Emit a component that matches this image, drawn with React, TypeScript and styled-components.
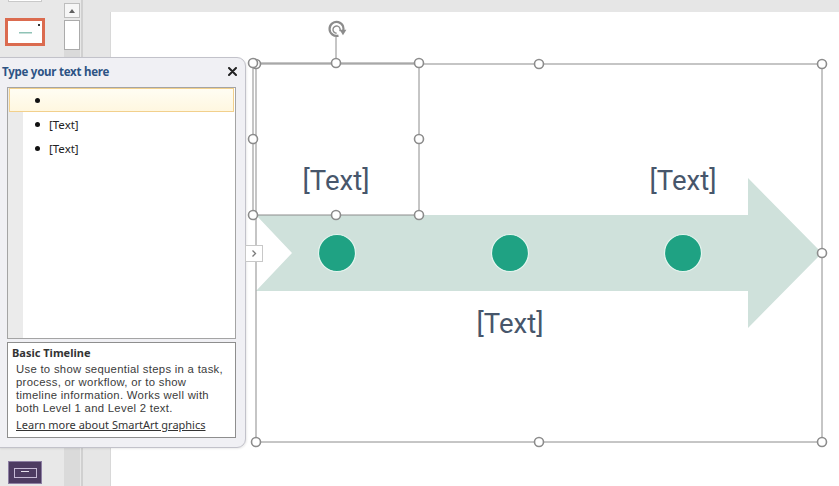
import styled, { createGlobalStyle } from 'styled-components';

const GlobalStyle = createGlobalStyle`
  html, body {
    margin: 0;
    padding: 0;
    overflow: hidden;
    background: #e6e6e6;
  }
`;

const Window = styled.div`
  position: relative;
  width: 839px;
  height: 486px;
  display: flex;
  background: #e6e6e6;
  overflow: hidden;
  font-family: 'Noto Sans', 'Open Sans', sans-serif;
`;

/* ---------- slide thumbnails ---------- */

const ThumbPane = styled.div`
  width: 81px;
  flex: none;
  display: flex;
  background: #e8e8e8;
  border-right: 2px solid #d0d0d0;
`;

const ThumbList = styled.div`
  width: 63px;
  display: flex;
  flex-direction: column;
  align-items: flex-start;
  padding-left: 8px;
  box-sizing: border-box;
`;

type ThumbKind = 'plain' | 'selected' | 'dark';

const Thumb = styled.div<{ $kind: ThumbKind }>`
  position: relative;
  width: 34px;
  height: 22px;
  flex: none;
  box-sizing: border-box;
  display: flex;
  align-items: center;
  justify-content: center;
  background: ${(p) => (p.$kind === 'dark' ? '#4d3b62' : '#ffffff')};
  border: 1px solid ${(p) => (p.$kind === 'dark' ? '#8d7fa3' : p.$kind === 'selected' ? '#ffffff' : '#c9c9c9')};
  outline: ${(p) => (p.$kind === 'selected' ? '3px solid #db6b4f' : 'none')};

  &:first-child {
    margin-top: -20px;
  }
  &:nth-child(2) {
    margin-top: 19px;
  }
  &:last-child {
    margin-top: auto;
    margin-bottom: 2px;
    height: 23px;
  }
`;

const ThumbCaption = styled.span`
  width: 13px;
  height: 1px;
  background: #8fc3b6;
  box-shadow: 0 1px 0 #c7e0da;
`;

const ThumbMark = styled.span`
  position: absolute;
  top: 2px;
  right: 1px;
  width: 2px;
  height: 2px;
  background: #333;
`;

const ThumbFrame = styled.span`
  width: 23px;
  height: 10px;
  box-sizing: border-box;
  border: 1px solid #c6bad6;
  display: flex;
  justify-content: center;
  padding-top: 2px;

  &::after {
    content: '';
    width: 8px;
    height: 1px;
    background: #e6e0ee;
  }
`;

const ScrollBar = styled.div`
  width: 16px;
  display: flex;
  flex-direction: column;
  margin-left: 1px;
`;

const ScrollButton = styled.div`
  margin-top: 3px;
  height: 15px;
  box-sizing: border-box;
  background: #f6f6f6;
  border: 1px solid #bdbdbd;
  display: flex;
  align-items: center;
  justify-content: center;

  &::before {
    content: '';
    border-left: 3px solid transparent;
    border-right: 3px solid transparent;
    border-bottom: 4px solid #606060;
  }
`;

const ScrollTrack = styled.div`
  flex: 1;
  margin-top: 2px;
  background: #dadada;
`;

const ScrollThumb = styled.div`
  height: 30px;
  box-sizing: border-box;
  background: #ffffff;
  border: 1px solid #ababab;
`;

const Gutter = styled.div`
  width: 28px;
  flex: none;
`;

/* ---------- slide with the SmartArt graphic ---------- */

const Stage = styled.div`
  flex: 1;
  padding-top: 12px;
  display: flex;
`;

const Slide = styled.div`
  position: relative;
  flex: 1;
  background: #ffffff;
  box-shadow: -1px 0 0 #d8d8d8;
`;

const Canvas = styled.svg`
  position: absolute;
  left: 0;
  top: 0;
`;

const NodeLabel = styled.div<{ $x: number; $y: number }>`
  position: absolute;
  left: ${(p) => p.$x}px;
  top: ${(p) => p.$y}px;
  transform: translate(-50%, -50%);
  font-family: Roboto, 'Noto Sans', sans-serif;
  font-size: 27.5px;
  font-weight: 400;
  color: #47566b;
  white-space: nowrap;
  line-height: 1;
`;

/* ---------- text pane ---------- */

const TextPane = styled.div`
  position: absolute;
  left: -1px;
  top: 57px;
  width: 247px;
  height: 391px;
  box-sizing: border-box;
  display: flex;
  flex-direction: column;
  padding: 0 9px 9px 7px;
  background: #f0f0f4;
  border: 1px solid #c2c2ca;
  border-radius: 0 9px 9px 0;
  box-shadow: 1px 1px 2px rgba(0, 0, 0, 0.08);
`;

const PaneHeader = styled.div`
  height: 29px;
  margin: 0 -9px 0 -7px;
  padding: 0 8px 2px 2px;
  box-sizing: border-box;
  display: flex;
  align-items: center;
  justify-content: space-between;
`;

const PaneTitle = styled.span`
  font-size: 11.5px;
  font-weight: 700;
  letter-spacing: -0.25px;
  color: #2d5384;
`;

const CloseButton = styled.svg`
  width: 9px;
  height: 9px;
`;

const OutlineBox = styled.div`
  height: 252px;
  flex: none;
  box-sizing: border-box;
  border: 1px solid #a4a4a4;
  background: linear-gradient(90deg, #ebebeb 0 15px, #ffffff 15px);
`;

const OutlineRow = styled.div<{ $active?: boolean }>`
  height: 24px;
  margin: 0 1px;
  box-sizing: border-box;
  display: flex;
  align-items: center;
  gap: 9px;
  padding-left: 25px;
  border: 1px solid ${(p) => (p.$active ? '#f2d08c' : 'transparent')};
  background: ${(p) => (p.$active ? 'linear-gradient(#fffdf3, #fff7e0)' : 'transparent')};
  font-size: 11.5px;
  color: #222;
`;

const Bullet = styled.span`
  width: 5px;
  height: 5px;
  border-radius: 50%;
  background: #111;
  flex: none;
`;

const DescBox = styled.div`
  margin-top: 3px;
  height: 96px;
  flex: none;
  box-sizing: border-box;
  border: 1px solid #8e8e8e;
  background: #ffffff;
  padding: 2px 4px 0 4px;
  color: #3b3b3b;
`;

const DescTitle = styled.div`
  font-size: 11px;
  font-weight: 700;
  line-height: 16px;
  color: #333;
`;

const DescBody = styled.div`
  margin-top: 2px;
  padding-left: 4px;
  display: flex;
  flex-direction: column;
`;

const DescLine = styled.div`
  height: 13px;
  font-family: 'Liberation Sans', Arial, sans-serif;
  font-size: 11.3px;
  letter-spacing: 0.3px;
  line-height: 13px;
  white-space: nowrap;
`;

const LearnLink = styled.a`
  display: block;
  margin-top: 3px;
  padding-left: 4px;
  font-size: 11px;
  line-height: 13px;
  color: #333;
  text-decoration: underline;
`;

const ExpandTab = styled.div`
  position: absolute;
  left: 245px;
  top: 245px;
  width: 18px;
  height: 17px;
  box-sizing: border-box;
  background: #ffffff;
  border: 1px solid #c8c8c8;
  display: flex;
  align-items: center;
  justify-content: center;
`;

const HANDLE = { r: 4.5, fill: '#ffffff', stroke: '#8c8c8c', strokeWidth: 1.6 };

const frameHandles: [number, number][] = [
  [256, 64], [539, 64], [822, 64],
  [256, 253], [822, 253],
  [256, 442], [539, 442], [822, 442],
];

const shapeHandles: [number, number][] = [
  [253, 63], [336, 63], [419, 63],
  [253, 139], [419, 139],
  [253, 215], [336, 215], [419, 215],
];

const milestones = [337, 510, 683];

// labels are placed in slide coordinates (slide origin is 111, 12)
const labels = [
  { x: 225, y: 169 },
  { x: 572, y: 169 },
  { x: 399, y: 312 },
];

const descLines = [
  'Use to show sequential steps in a task,',
  'process, or workflow, or to show',
  'timeline information. Works well with',
  'both Level 1 and Level 2 text.',
];

function TimelineGraphic() {
  return (
    <Canvas width={728} height={474} viewBox="111 12 728 474">
      <polygon
        points="256,215 748,215 748,178 822,253 748,328 748,291 256,291 292,253"
        fill="#cfe1db"
      />
      {milestones.map((cx) => (
        <circle key={cx} cx={cx} cy={253} r={18.5} fill="#1fa283" stroke="#e4f5ef" strokeWidth={1.2} />
      ))}

      <rect x={256} y={64} width={566} height={378} fill="none" stroke="#8c8c8c" strokeWidth={1} />
      <rect x={253} y={63} width={166} height={152} fill="none" stroke="#8c8c8c" strokeWidth={1} />

      {/* rotate handle */}
      <line x1={336} y1={37} x2={336} y2={63} stroke="#8c8c8c" strokeWidth={1} />
      <path d="M342.6 32.4 A7 7 0 1 0 338.5 35.6" fill="none" stroke="#8c8c8c" strokeWidth={2.2} />
      <path d="M339.8 31.2 A3.6 3.6 0 1 0 336.6 33.2" fill="none" stroke="#8c8c8c" strokeWidth={1.4} />
      <polygon points="339.6,29.8 346.4,29.8 343,35.2" fill="#8c8c8c" />

      {[...frameHandles, ...shapeHandles].map(([cx, cy], i) => (
        <circle key={i} cx={cx} cy={cy} {...HANDLE} />
      ))}
    </Canvas>
  );
}

export default function App() {
  return (
    <>
      <GlobalStyle />
      <Window>
        <ThumbPane>
          <ThumbList>
            <Thumb $kind="plain" />
            <Thumb $kind="selected">
              <ThumbCaption />
              <ThumbMark />
            </Thumb>
            <Thumb $kind="dark">
              <ThumbFrame />
            </Thumb>
          </ThumbList>
          <ScrollBar>
            <ScrollButton />
            <ScrollTrack>
              <ScrollThumb />
            </ScrollTrack>
          </ScrollBar>
        </ThumbPane>
        <Gutter />
        <Stage>
          <Slide>
            <TimelineGraphic />
            {labels.map((l, i) => (
              <NodeLabel key={i} $x={l.x} $y={l.y}>
                [Text]
              </NodeLabel>
            ))}
          </Slide>
        </Stage>

        <TextPane>
          <PaneHeader>
            <PaneTitle>Type your text here</PaneTitle>
            <CloseButton viewBox="0 0 9 9">
              <path d="M1 1 L8 8 M8 1 L1 8" stroke="#222" strokeWidth={2} strokeLinecap="round" />
            </CloseButton>
          </PaneHeader>
          <OutlineBox>
            <OutlineRow $active>
              <Bullet />
            </OutlineRow>
            <OutlineRow>
              <Bullet />
              [Text]
            </OutlineRow>
            <OutlineRow>
              <Bullet />
              [Text]
            </OutlineRow>
          </OutlineBox>
          <DescBox>
            <DescTitle>Basic Timeline</DescTitle>
            <DescBody>
              {descLines.map((line) => (
                <DescLine key={line}>{line}</DescLine>
              ))}
            </DescBody>
            <LearnLink>Learn more about SmartArt graphics</LearnLink>
          </DescBox>
        </TextPane>
        <ExpandTab>
          <svg width="8" height="9" viewBox="0 0 8 9">
            <path d="M2.5 1.5 L5.5 4.5 L2.5 7.5" fill="none" stroke="#7a7a7a" strokeWidth={1.3} />
          </svg>
        </ExpandTab>
      </Window>
    </>
  );
}
